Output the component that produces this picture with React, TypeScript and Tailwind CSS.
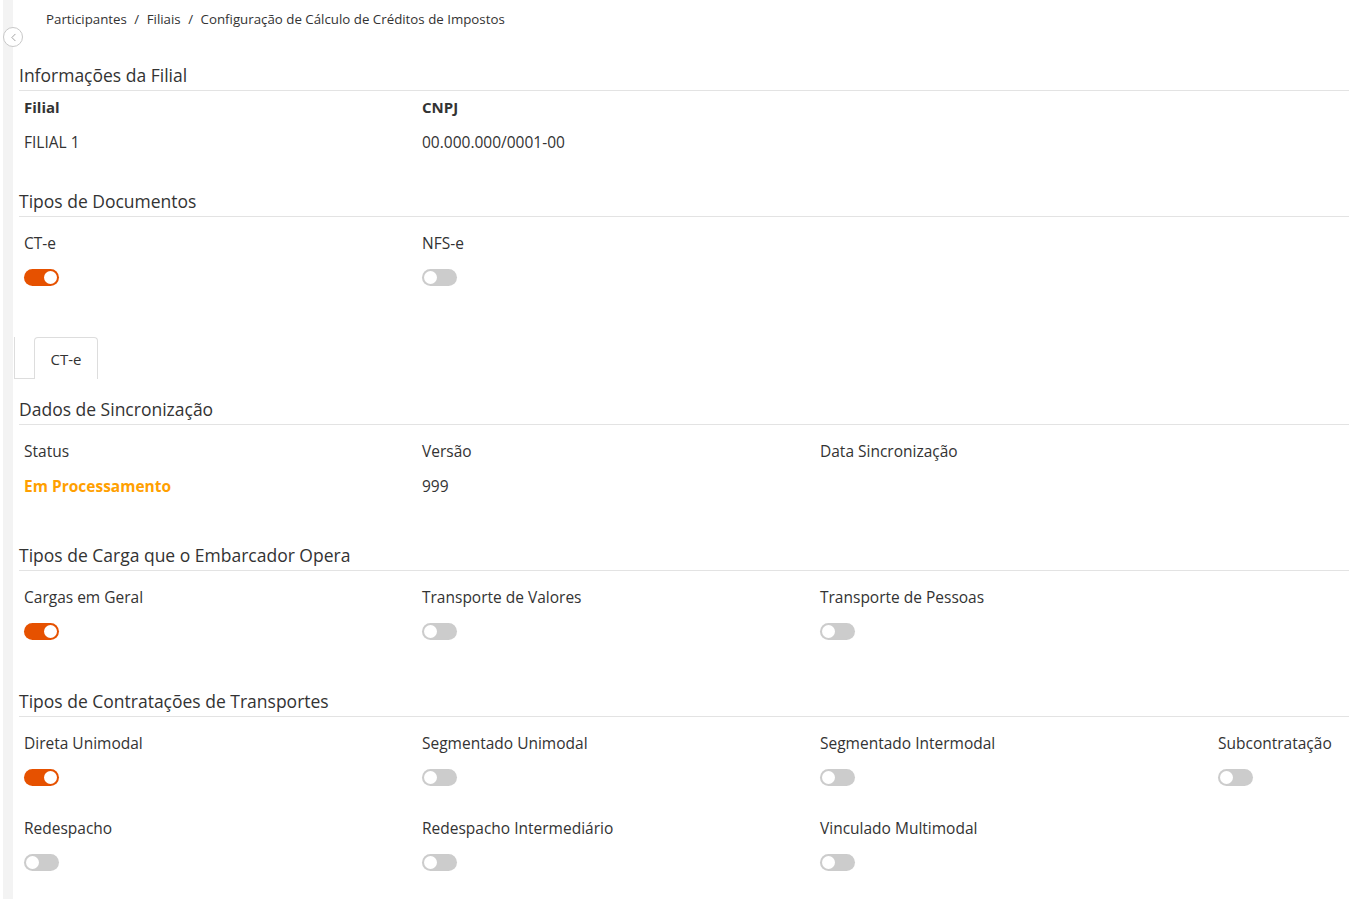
import { ChevronLeft } from "lucide-react";

type Field = { label: string; on: boolean };

const docTypes: Field[] = [
  { label: "CT-e", on: true },
  { label: "NFS-e", on: false },
];

const cargaTypes: Field[] = [
  { label: "Cargas em Geral", on: true },
  { label: "Transporte de Valores", on: false },
  { label: "Transporte de Pessoas", on: false },
];

const contratacoes: Field[] = [
  { label: "Direta Unimodal", on: true },
  { label: "Segmentado Unimodal", on: false },
  { label: "Segmentado Intermodal", on: false },
  { label: "Subcontratação", on: false },
  { label: "Redespacho", on: false },
  { label: "Redespacho Intermediário", on: false },
  { label: "Vinculado Multimodal", on: false },
];

function Toggle({ on }: { on: boolean }) {
  return (
    <div
      className={`flex h-[17px] w-[35px] items-center rounded-full px-[2px] ${
        on ? "justify-end bg-[#e65100]" : "justify-start bg-[#cccccc]"
      }`}
    >
      <div className="h-[13px] w-[13px] rounded-full bg-white" />
    </div>
  );
}

function SectionHeader({ title }: { title: string }) {
  return (
    <div className="border-b border-[#e3e3e3] pt-[1px] pb-[3px] text-[17.5px] leading-6 text-[#333]">
      {title}
    </div>
  );
}

function ToggleGrid({ fields }: { fields: Field[] }) {
  return (
    <div className="mt-[16px] grid grid-cols-[398px_398px_398px_1fr] gap-y-[32px] px-[5px]">
      {fields.map((f) => (
        <div key={f.label}>
          <div className="text-[15.5px] leading-5 text-[#333]">{f.label}</div>
          <div className="mt-[16px]">
            <Toggle on={f.on} />
          </div>
        </div>
      ))}
    </div>
  );
}

export default function App() {
  return (
    <div
      className="relative flex min-h-[899px] w-full overflow-hidden bg-white text-[#333]"
      style={{ fontFamily: "'Open Sans', 'Noto Sans', sans-serif" }}
    >
      {/* side strip */}
      <div className="ml-[3px] w-[10px] shrink-0 bg-[#f3f3f3]" />
      <button
        className="absolute left-[3px] top-[27px] flex h-[20px] w-[20px] items-center justify-center rounded-full border border-[#c8c8c8] bg-white text-[#777]"
        aria-label="Recolher"
      >
        <ChevronLeft className="h-[13px] w-[13px]" strokeWidth={1.25} />
      </button>

      <div className="flex-1 pl-[6px] pt-[10px] pb-[29px]">
        {/* Breadcrumb */}
        <div className="pl-[27px] text-[13.3px] leading-[18px] text-[#333]">
          Participantes <span className="mx-[4px]">/</span> Filiais{" "}
          <span className="mx-[4px]">/</span> Configuração de Cálculo de Créditos de Impostos
        </div>

        {/* Informações da Filial */}
        <div className="mt-[34px]">
          <SectionHeader title="Informações da Filial" />
          <div className="mt-[6px] grid grid-cols-[398px_1fr] px-[5px] text-[15px] leading-5">
            <div className="font-bold">Filial</div>
            <div className="font-bold">CNPJ</div>
            <div className="mt-[15px] text-[15.5px]">FILIAL 1</div>
            <div className="mt-[15px] text-[15.5px]">00.000.000/0001-00</div>
          </div>
        </div>

        {/* Tipos de Documentos */}
        <div className="mt-[36px]">
          <SectionHeader title="Tipos de Documentos" />
          <ToggleGrid fields={docTypes} />
        </div>

        {/* Tabs */}
        <div className="-ml-[5px] mt-[51px] flex h-[42px]">
          <div className="w-[20px] border-b border-l border-[#dddddd]" />
          <div className="flex w-[64px] items-center justify-center rounded-t-[4px] border-x border-t border-[#dddddd] pt-[1px] text-[15px]">
            CT-e
          </div>
        </div>

        {/* Dados de Sincronização */}
        <div className="mt-[17px]">
          <SectionHeader title="Dados de Sincronização" />
          <div className="mt-[16px] grid grid-cols-[398px_398px_1fr] px-[5px] text-[15.5px] leading-5">
            <div>Status</div>
            <div>Versão</div>
            <div>Data Sincronização</div>
            <div className="mt-[15px] font-bold text-[#ffa000]">Em Processamento</div>
            <div className="mt-[15px]">999</div>
            <div className="mt-[15px]" />
          </div>
        </div>

        {/* Tipos de Carga */}
        <div className="mt-[46px]">
          <SectionHeader title="Tipos de Carga que o Embarcador Opera" />
          <ToggleGrid fields={cargaTypes} />
        </div>

        {/* Tipos de Contratações */}
        <div className="mt-[48px]">
          <SectionHeader title="Tipos de Contratações de Transportes" />
          <ToggleGrid fields={contratacoes} />
        </div>
      </div>
    </div>
  );
}
